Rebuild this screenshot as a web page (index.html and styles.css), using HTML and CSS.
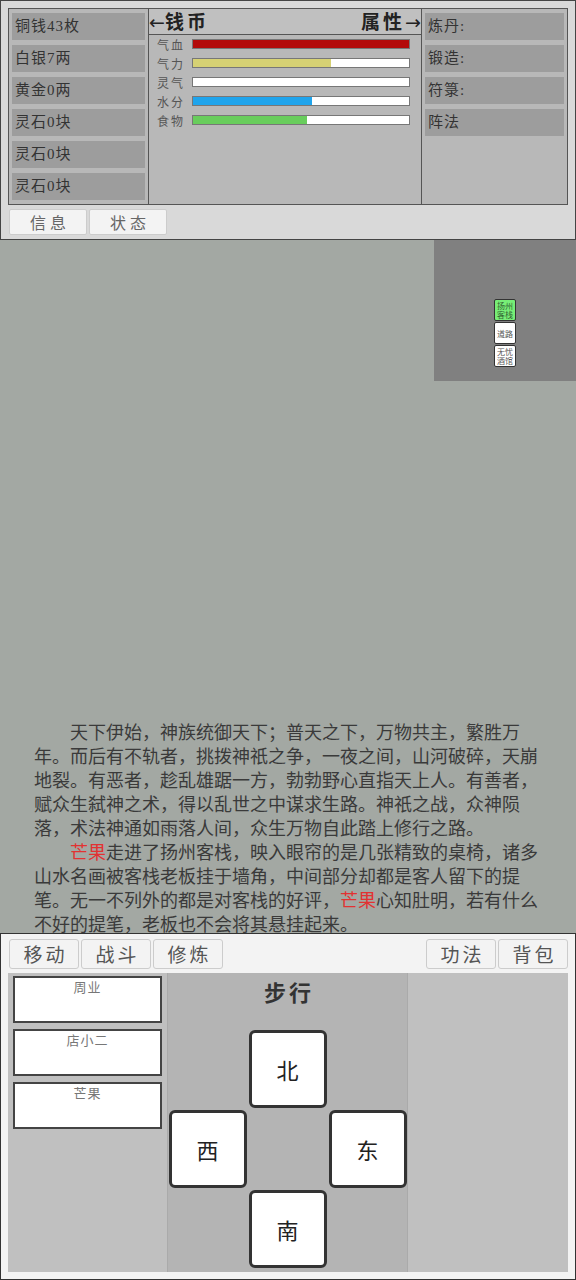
FILE: index.html
```html
<!DOCTYPE html>
<html lang="zh">
<head>
  <meta charset="UTF-8">
  <meta name="viewport" content="width=device-width, initial-scale=1.0">
  <title>修行</title>
  <link rel="stylesheet" href="styles.css">
</head>
<body>
  <div class="top-panel">
    <div class="stats">
      <div class="col money">
        <div class="item">铜钱43枚</div>
        <div class="item">白银7两</div>
        <div class="item">黄金0两</div>
        <div class="item">灵石0块</div>
        <div class="item">灵石0块</div>
        <div class="item">灵石0块</div>
      </div>
      <div class="col attrs">
        <div class="attrs-head">
          <span><span class="arrow">←</span>钱币</span>
          <span>属性<span class="arrow">→</span></span>
        </div>
        <div class="bars">
          <div class="bar-row"><span class="bar-label">气血</span><div class="bar"><div class="fill red" style="width: 100%"></div></div></div>
          <div class="bar-row"><span class="bar-label">气力</span><div class="bar"><div class="fill yellow" style="width: 64%"></div></div></div>
          <div class="bar-row"><span class="bar-label">灵气</span><div class="bar"><div class="fill" style="width: 0%"></div></div></div>
          <div class="bar-row"><span class="bar-label">水分</span><div class="bar"><div class="fill blue" style="width: 55%"></div></div></div>
          <div class="bar-row"><span class="bar-label">食物</span><div class="bar"><div class="fill green" style="width: 53%"></div></div></div>
        </div>
      </div>
      <div class="col skills">
        <div class="item">炼丹:</div>
        <div class="item">锻造:</div>
        <div class="item">符箓:</div>
        <div class="item">阵法</div>
      </div>
    </div>
    <div class="tabs">
      <button class="tab">信息</button>
      <button class="tab">状态</button>
    </div>
  </div>

  <div class="scene">
    <div class="map">
      <div class="nodes">
        <div class="node here">扬州客栈</div>
        <div class="node">道路</div>
        <div class="node">无忧酒馆</div>
      </div>
    </div>
    <div class="story">
      <p>天下伊始，神族统御天下；普天之下，万物共主，繁胜万年。而后有不轨者，挑拨神祇之争，一夜之间，山河破碎，天崩地裂。有恶者，趁乱雄踞一方，勃勃野心直指天上人。有善者，赋众生弑神之术，得以乱世之中谋求生路。神祇之战，众神陨落，术法神通如雨落人间，众生万物自此踏上修行之路。</p>
      <p><span class="name">芒果</span>走进了扬州客栈，映入眼帘的是几张精致的桌椅，诸多山水名画被客栈老板挂于墙角，中间部分却都是客人留下的提笔。无一不列外的都是对客栈的好评，<span class="name">芒果</span>心知肚明，若有什么不好的提笔，老板也不会将其悬挂起来。</p>
    </div>
  </div>

  <div class="bottom-panel">
    <div class="menu">
      <div class="menu-group">
        <button class="menu-btn">移动</button>
        <button class="menu-btn">战斗</button>
        <button class="menu-btn">修炼</button>
      </div>
      <div class="menu-group">
        <button class="menu-btn">功法</button>
        <button class="menu-btn">背包</button>
      </div>
    </div>
    <div class="board">
      <div class="people">
        <div class="person">周业</div>
        <div class="person">店小二</div>
        <div class="person">芒果</div>
      </div>
      <div class="walk">
        <div class="walk-title">步行</div>
        <div class="dirs">
          <button class="dir north">北</button>
          <button class="dir west">西</button>
          <button class="dir east">东</button>
          <button class="dir south">南</button>
        </div>
      </div>
      <div class="side"></div>
    </div>
  </div>
</body>
</html>
```

FILE: styles.css
```css
* {
  box-sizing: border-box;
}

body {
  margin: 0;
  width: 576px;
  height: 1280px;
  display: flex;
  flex-direction: column;
  font-family: "Liberation Serif", "Noto Sans CJK SC", serif;
  color: #333;
  background-color: #a3a8a3;
}

button {
  font-family: inherit;
  cursor: pointer;
}

/* ---- panneau du haut ---- */
.top-panel {
  height: 240px;
  flex-shrink: 0;
  background-color: #d9d9d9;
  border: 1px solid #444;
  padding: 7px 7px 0 7px;
}

.stats {
  height: 197px;
  border: 1px solid #555;
  display: grid;
  grid-template-columns: 140px 273px 1fr;
  background-color: #b8b8b8;
}

.col {
  border-right: 1px solid #555;
}

.col:last-child {
  border-right: none;
}

.money,
.skills {
  padding: 4px 3px 0 3px;
  display: flex;
  flex-direction: column;
  gap: 5px;
}

.item {
  height: 27px;
  line-height: 27px;
  background-color: #9d9d9d;
  font-size: 15px;
  padding-left: 3px;
  color: #333;
  letter-spacing: 1px;
}

.attrs-head {
  height: 26px;
  border-bottom: 1px solid #555;
  display: flex;
  justify-content: space-between;
  align-items: center;
  font-family: "Noto Sans CJK SC", sans-serif;
  font-weight: bold;
  font-size: 19px;
  letter-spacing: 3px;
  color: #222;
  background-color: #c0c0c0;
  padding: 0 0 2px 0;
}

.arrow {
  font-family: "DejaVu Sans", sans-serif;
  font-weight: normal;
  letter-spacing: 0;
}

.bars {
  padding: 4px 11px 0 8px;
  display: flex;
  flex-direction: column;
  gap: 9px;
}

.bar-row {
  display: flex;
  align-items: center;
  height: 10px;
}

.bar-label {
  width: 35px;
  font-family: "Noto Sans CJK SC", sans-serif;
  font-size: 12px;
  letter-spacing: 2px;
  color: #555;
}

.bar {
  flex: 1;
  height: 10px;
  background-color: #fff;
  border: 1px solid #777;
}

.fill {
  height: 100%;
}

.red { background-color: #b30a0a; }
.yellow { background-color: #d6d174; }
.blue { background-color: #1fa4ec; }
.green { background-color: #68cd5c; }

.tabs {
  margin-top: 4px;
  padding-left: 1px;
  display: flex;
  gap: 2px;
}

.tab {
  width: 78px;
  height: 26px;
  border: 1px solid #ccc;
  border-radius: 2px;
  background-color: #f3f3f3;
  font-family: "Noto Sans CJK SC", sans-serif;
  font-size: 16px;
  letter-spacing: 4px;
  color: #666;
  padding: 0 0 0 4px;
  line-height: 22px;
}

/* ---- scène ---- */
.scene {
  flex: 1;
  position: relative;
  display: flex;
  flex-direction: column;
  justify-content: flex-end;
}

.map {
  position: absolute;
  top: 0;
  right: 0;
  width: 142px;
  height: 141px;
  background-color: #808080;
}

.nodes {
  position: absolute;
  left: 60px;
  top: 59px;
  display: flex;
  flex-direction: column;
  gap: 1px;
}

.node {
  width: 22px;
  height: 22px;
  border: 1px solid #333;
  border-radius: 2px;
  background-color: #fff;
  font-family: "Noto Sans CJK SC", sans-serif;
  font-size: 8px;
  line-height: 9px;
  color: #555;
  text-align: center;
  display: flex;
  align-items: center;
  justify-content: center;
  padding: 1px;
}

.node.here {
  background-color: #77ee77;
  color: #336633;
}

.story {
  padding: 0 24px 0 34px;
  margin-bottom: -2px;
}

.story p {
  margin: 0;
  font-family: "Noto Sans CJK SC", sans-serif;
  font-size: 18px;
  line-height: 24px;
  text-indent: 2em;
  color: #3a3a3a;
}

.name {
  display: inline-block;
  text-indent: 0;
  line-height: 20px;
  color: #e23232;
}

/* ---- panneau du bas ---- */
.bottom-panel {
  height: 347px;
  flex-shrink: 0;
  background-color: #f3f3f3;
  border: 1px solid #333;
  padding: 5px 7px 7px 7px;
  display: flex;
  flex-direction: column;
}

.menu {
  display: flex;
  justify-content: space-between;
  padding-left: 1px;
}

.menu-group {
  display: flex;
  gap: 2px;
}

.menu-btn {
  width: 70px;
  height: 30px;
  border: 1px solid #ccc;
  border-radius: 3px;
  background-color: #f3f3f3;
  font-family: "Noto Sans CJK SC", sans-serif;
  font-size: 19px;
  letter-spacing: 3px;
  color: #555;
  padding: 0 0 0 3px;
  line-height: 26px;
}

.board {
  margin-top: 4px;
  flex: 1;
  display: grid;
  grid-template-columns: 159px 241px 1fr;
}

.people {
  background-color: #c0c0c0;
  padding: 3px 5px 0 5px;
  display: flex;
  flex-direction: column;
  gap: 6px;
}

.person {
  height: 47px;
  background-color: #fff;
  border: 2px solid #444;
  text-align: center;
  font-family: "Noto Sans CJK SC", sans-serif;
  font-size: 13px;
  letter-spacing: 1px;
  color: #777;
  line-height: 18px;
}

.walk {
  background-color: #b4b4b4;
  border-left: 1px solid #aaa;
  border-right: 1px solid #aaa;
  display: flex;
  flex-direction: column;
  align-items: center;
}

.walk-title {
  margin-top: 2px;
  font-family: "Noto Sans CJK SC", sans-serif;
  font-weight: bold;
  font-size: 22px;
  letter-spacing: 3px;
  color: #333;
  padding-left: 3px;
}

.dirs {
  margin-top: 23px;
  display: grid;
  grid-template-columns: repeat(3, 78px);
  grid-template-rows: repeat(3, 78px);
  gap: 2px;
}

.dir {
  width: 78px;
  height: 78px;
  border: 3px solid #333;
  border-radius: 6px;
  background-color: #fff;
  font-family: "Noto Sans CJK SC", sans-serif;
  font-size: 22px;
  color: #222;
  padding: 0;
}

.north { grid-column: 2; grid-row: 1; }
.west { grid-column: 1; grid-row: 2; }
.east { grid-column: 3; grid-row: 2; }
.south { grid-column: 2; grid-row: 3; }

.side {
  background-color: #c0c0c0;
}
```
